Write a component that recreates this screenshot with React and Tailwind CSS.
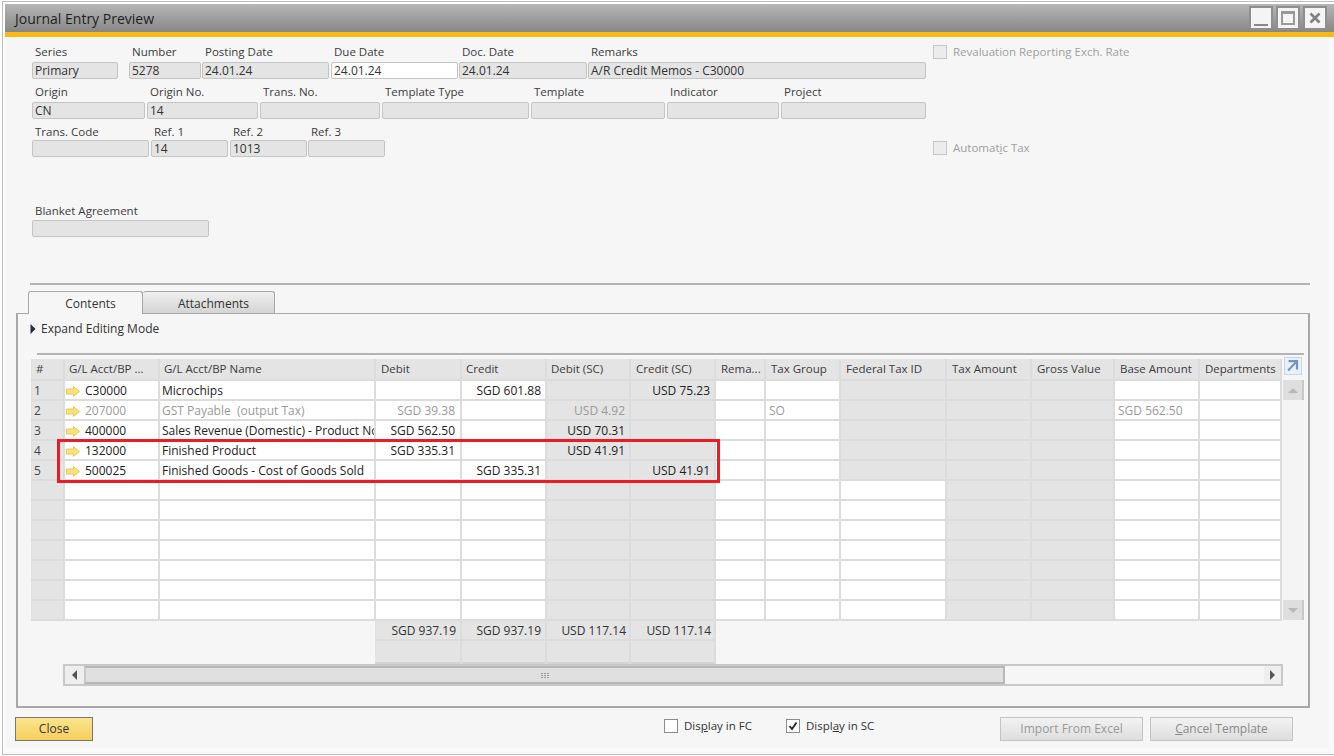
const G = "bg-[#e4e4e4]"

const columns = [
  { label: "#", w: "w-[34px]", pl: "pl-[5px]" },
  { label: "G/L Acct/BP ...", w: "w-[95px]", pl: "pl-[4px]" },
  { label: "G/L Acct/BP Name", w: "w-[216px]", pl: "pl-[4px]" },
  { label: "Debit", w: "w-[86px]" },
  { label: "Credit", w: "w-[85px]", pl: "pl-[4px]" },
  { label: "Debit (SC)", w: "w-[84px]", pl: "pl-[4px]" },
  { label: "Credit (SC)", w: "w-[85px]" },
  { label: "Rema...", w: "w-[50px]" },
  { label: "Tax Group", w: "w-[75px]" },
  { label: "Federal Tax ID", w: "w-[106px]" },
  { label: "Tax Amount", w: "w-[85px]" },
  { label: "Gross Value", w: "w-[83px]" },
  { label: "Base Amount", w: "w-[85px]" },
  { label: "Departments", w: "w-[82px]" },
]

const rows = [
  { acct: "C30000", name: "Microchips", credit: "SGD 601.88", creditSc: "USD 75.23" },
  { acct: "207000", name: "GST Payable  (output Tax)", debit: "SGD 39.38", debitSc: "USD 4.92", group: "SO", base: "SGD 562.50", dim: true },
  { acct: "400000", name: "Sales Revenue (Domestic) - Product No", debit: "SGD 562.50", debitSc: "USD 70.31" },
  { acct: "132000", name: "Finished Product", debit: "SGD 335.31", debitSc: "USD 41.91" },
  { acct: "500025", name: "Finished Goods - Cost of Goods Sold", credit: "SGD 335.31", creditSc: "USD 41.91" },
]

const totals = [
  { text: "SGD 937.19", w: "w-[87px]", pr: "pr-[4px]" },
  { text: "SGD 937.19", w: "w-[85px]", pr: "pr-[4px]" },
  { text: "USD 117.14", w: "w-[84px]", pr: "pr-[3px]" },
  { text: "USD 117.14", w: "w-[85px]", pr: "pr-[3px]" },
]

function Field({ label, value, w, ml = "", white, gap = "mb-[2px]" }) {
  return (
    <div className={`flex flex-col ${w} ${ml}`}>
      <div className={`h-[17px] ${gap} pl-[3px] text-[11.5px] leading-[17px] text-[#3c3c3c] whitespace-nowrap`}>{label}</div>
      <div className={`h-[17px] rounded-[2px] border border-[#c4c4c4] pl-[2px] leading-[16px] text-[#333] ${white ? "bg-white" : G}`}>
        {value}
      </div>
    </div>
  )
}

function Check({ checked, dim, children, className = "" }) {
  return (
    <div className={`flex items-center gap-[6px] h-[14px] text-[11.5px] ${className}`}>
      <div className={`w-[14px] h-[14px] border flex items-center justify-center ${dim ? "border-[#c8c8c8] bg-[#ececec]" : "border-[#8c8c8c] bg-white"}`}>
        {checked && (
          <svg width="10" height="10" viewBox="0 0 10 10">
            <path d="M1.5 5 L4 8 L8.5 1.5" fill="none" stroke="#222" strokeWidth="1.8" />
          </svg>
        )}
      </div>
      <span className={dim ? "text-[#a0a0a0]" : "text-[#333]"}>{children}</span>
    </div>
  )
}

function Arrow() {
  return (
    <svg width="14" height="11" viewBox="0 0 14 11" className="shrink-0">
      <path d="M0.5 3 H7.5 V0.6 L13.4 5.5 L7.5 10.4 V8 H0.5 Z" fill="#f8e27a" stroke="#e8c655" strokeWidth="1" />
    </svg>
  )
}

function WinButton({ children }) {
  return (
    <div className="w-[24px] h-[24px] border-2 border-[#8f8f8f] bg-[#f4f4f4] flex items-center justify-center">
      {children}
    </div>
  )
}

function Grid() {
  const base = "border-r-2 border-b-2 border-[#dcdcdc] p-0 whitespace-pre overflow-hidden"
  const cell = `${base} h-[20px] pt-[2px] leading-[16px]`
  return (
    <table className="table-fixed border-separate border-spacing-0 w-[1251px]">
      <colgroup>
        {columns.map((c) => <col key={c.label} className={c.w} />)}
      </colgroup>
      <thead>
        <tr>
          {columns.map((c) => (
            <th key={c.label} className={`${base} h-[22px] leading-[18px] ${G} font-normal text-left text-[11.5px] ${c.pl || "pl-[5px]"} text-[#3c3c3c]`}>{c.label}</th>
          ))}
        </tr>
      </thead>
      <tbody>
        {Array.from({ length: 12 }).map((_, i) => {
          const r = rows[i]
          const text = r && r.dim ? "text-[#9a9a9a]" : "text-[#222]"
          const amt = `${cell} text-right pr-[4px]`
          return (
            <tr key={i} className={`${text} bg-white`}>
              <td className={`${cell} ${G} pl-[3px] text-[#444]`}>{r ? i + 1 : ""}</td>
              <td className={`${cell} pl-[1px]`}>
                {r && <div className="flex items-center gap-[5px]"><Arrow />{r.acct}</div>}
              </td>
              <td className={`${cell} pl-[2px]`}>{r && r.name}</td>
              <td className={`${cell} text-right pr-[5px]`}>{r && r.debit}</td>
              <td className={amt}>{r && r.credit}</td>
              <td className={`${amt} ${G}`}>{r && r.debitSc}</td>
              <td className={`${amt} ${G}`}>{r && r.creditSc}</td>
              <td className={cell}></td>
              <td className={`${cell} pl-[3px]`}>{r && r.group}</td>
              <td className={`${cell} ${r ? G : ""}`}></td>
              <td className={`${cell} ${G}`}></td>
              <td className={`${cell} ${G}`}></td>
              <td className={`${cell} pl-[3px]`}>{r && r.base}</td>
              <td className={cell}></td>
            </tr>
          )
        })}
      </tbody>
    </table>
  )
}

export default function App() {
  return (
    <div className="w-[1334px] h-[756px] bg-white pt-[1px] pl-[2px] overflow-hidden text-[12px] font-['Open_Sans',sans-serif]">
      <div className="h-[754px] border-l border-t border-b border-[#bdbdbd] bg-[#f6f6f6] flex flex-col">
        <div className="shrink-0 bg-white pt-[2px] pl-[2px]">
          <div className="h-[28px] bg-gradient-to-b from-[#b6b6b6] to-[#878787] flex items-center justify-between pl-[10px] pr-[7px]">
            <span className="text-[14px] pt-[1px] text-[#1f1f1f]">Journal Entry Preview</span>
            <div className="flex gap-[3px]">
              <WinButton><div className="w-[14px] h-[2px] bg-[#888] mt-[14px]" /></WinButton>
              <WinButton><div className="w-[14px] h-[14px] border-2 border-[#999] border-t-[3px]" /></WinButton>
              <WinButton>
                <svg width="12" height="12" viewBox="0 0 12 12">
                  <path d="M1.5 1.5 L10.5 10.5 M10.5 1.5 L1.5 10.5" stroke="#808080" strokeWidth="2.6" />
                </svg>
              </WinButton>
            </div>
          </div>
          <div className="h-[5px] bg-[#fdb913]" />
        </div>

        <div className="flex-1 border-l-[3px] border-r-[5px] border-b-[6px] border-[#fafafa] pl-[10px]">
          <div className="ml-[16px] pt-[6px]">
            <div className="flex items-start">
              <div className="w-[894px]">
                <div className="flex">
                  <Field label="Series" value="Primary" w="w-[86px]" />
                  <Field label="Number" value="5278" w="w-[72px]" ml="ml-[11px]" />
                  <Field label="Posting Date" value="24.01.24" w="w-[127px]" ml="ml-[1px]" />
                  <Field label="Due Date" value="24.01.24" w="w-[127px]" ml="ml-[2px]" white />
                  <Field label="Doc. Date" value="24.01.24" w="w-[128px]" ml="ml-[1px]" />
                  <Field label="Remarks" value="A/R Credit Memos - C30000" w="w-[338px]" ml="ml-[1px]" />
                </div>
                <div className="flex mt-[4px]">
                  <Field label="Origin" value="CN" w="w-[113px]" />
                  <Field label="Origin No." value="14" w="w-[111px]" ml="ml-[2px]" />
                  <Field label="Trans. No." w="w-[120px]" ml="ml-[2px]" />
                  <Field label="Template Type" w="w-[147px]" ml="ml-[2px]" />
                  <Field label="Template" w="w-[134px]" ml="ml-[2px]" />
                  <Field label="Indicator" w="w-[112px]" ml="ml-[2px]" />
                  <Field label="Project" w="w-[145px]" ml="ml-[2px]" />
                </div>
                <div className="flex mt-[4px]">
                  <Field label="Trans. Code" w="w-[117px]" gap="mb-0" />
                  <Field label="Ref. 1" value="14" w="w-[77px]" ml="ml-[2px]" gap="mb-0" />
                  <Field label="Ref. 2" value="1013" w="w-[77px]" ml="ml-[2px]" gap="mb-0" />
                  <Field label="Ref. 3" w="w-[77px]" ml="ml-[1px]" gap="mb-0" />
                </div>
              </div>
              <div className="ml-[7px] mt-[2px]">
                <Check dim>Revaluation Reporting Exch. Rate</Check>
                <Check dim className="mt-[82px]">Automat<span className="underline">i</span>c Tax</Check>
              </div>
            </div>
            <div className="mt-[45px] w-[177px]">
              <Field label="Blanket Agreement" w="w-[177px]" gap="mb-[1px]" />
            </div>
          </div>

          <div className="mt-[46px] ml-[14px] w-[1280px] h-[2px] bg-[#b4b4b4]" />

          <div className="flex mt-[6px] ml-[12px] relative z-10 h-[22px]">
            <div className="w-[115px] h-[23px] pl-[10px] rounded-t-[3px] border border-b-0 border-[#a8a8a8] bg-[#f6f6f6] text-center leading-[24px] text-[#333]">Contents</div>
            <div className="w-[132px] pl-[10px] rounded-t-[3px] border border-b-0 border-l-0 border-[#a8a8a8] bg-gradient-to-b from-[#efefef] to-[#d4d4d4] text-center leading-[24px] text-[#333]">Attachments</div>
          </div>

          <div className="w-[1294px] h-[395px] border-2 border-[#a8a8a8] border-t-[1px] pt-[8px]">
            <div className="flex items-center pl-[12px] h-[14px] text-[#333]">
              <svg width="6" height="10" viewBox="0 0 6 10" className="mr-[5px]"><path d="M0.5 0 L5.5 5 L0.5 10 Z" fill="#2a2a40" /></svg>
              Expand Editing Mode
            </div>

            <div className="relative mt-[17px] ml-[13px]">
              <div className="ml-[6px] w-[1267px] h-[2px] bg-[#b4b4b4]" />
              <div className="flex mt-[4px]">
                <Grid />
                <div className="flex flex-col ml-[1px] w-[21px] -mt-[2px] mb-[1px]">
                  <svg width="18" height="18" viewBox="0 0 18 18" className="ml-[1px] bg-[#eaf0f8] border border-[#c8d6ea]">
                    <path d="M4 3.5 H13.5 V13 M13.5 3.5 L3.5 14" fill="none" stroke="#6f93c9" strokeWidth="2.4" />
                  </svg>
                  <div className="mt-[5px] h-[20px] bg-[#dedede] flex items-center justify-center border-r-2 border-[#c8c8c8]">
                    <div className="w-0 h-0 border-x-[5px] border-x-transparent border-b-[5px] border-b-[#b8b8b8]" />
                  </div>
                  <div className="flex-1 bg-[#f4f4f4]" />
                  <div className="h-[20px] bg-[#dedede] flex items-center justify-center border-r-2 border-[#c8c8c8]">
                    <div className="w-0 h-0 border-x-[5px] border-x-transparent border-t-[5px] border-t-[#b8b8b8]" />
                  </div>
                </div>
              </div>

              <div className="flex ml-[344px]">
                {totals.map((t, i) => (
                  <div key={i} className={`${t.w} border-r-2 border-[#dcdcdc]`}>
                    <div className={`h-[20px] ${G} border-b-2 border-[#dcdcdc] text-right ${t.pr} pt-[2px] leading-[16px] text-[#333]`}>{t.text}</div>
                    <div className={`h-[23px] ${G} border-b-2 border-[#d4d4d4]`} />
                  </div>
                ))}
              </div>

              <div className="ml-[32px] w-[1220px] h-[22px] border-2 border-[#c8c8c8] flex items-stretch">
                <div className="w-[19px] bg-[#eeeeee] flex items-center justify-center">
                  <div className="w-0 h-0 border-y-[5px] border-y-transparent border-r-[5px] border-r-[#555]" />
                </div>
                <div className="w-[921px] bg-[#e0e0e0] border-2 border-[#b8b8b8] border-l-[#c8c8c8] flex items-center justify-center">
                  <div className="grid grid-cols-3 gap-[1px]">
                    {Array.from({ length: 9 }).map((_, i) => <div key={i} className="w-[2px] h-[1px] bg-[#9a9a9a]" />)}
                  </div>
                </div>
                <div className="flex-1" />
                <div className="w-[17px] bg-[#eeeeee] flex items-center justify-center">
                  <div className="w-0 h-0 border-y-[5px] border-y-transparent border-l-[5px] border-l-[#555]" />
                </div>
              </div>

              {/* red highlight over rows 4 and 5 */}
              <div className="absolute left-[26px] top-[86px] w-[663px] h-[44px] border-[3px] border-[#ed1c24]" />
            </div>
          </div>

          <div className="flex items-start mt-[9px] -ml-[1px]">
            <div className="w-[78px] h-[24px] border border-[#777] bg-gradient-to-b from-[#fbe58c] to-[#f5cf5c] text-center leading-[22px] text-[#333]">Close</div>
            <Check className="ml-[571px] w-[122px] mt-[2px]">Dis<span className="underline">p</span>lay in FC</Check>
            <Check checked className="w-[214px] mt-[2px]">Displ<span className="underline">a</span>y in SC</Check>
            <div className="w-[143px] h-[24px] border border-[#c4c4c4] bg-gradient-to-b from-[#f2f2f2] to-[#dedede] text-center leading-[22px] text-[#9a9a9a]">Import From Excel</div>
            <div className="ml-[7px] w-[143px] h-[24px] border border-[#c4c4c4] bg-gradient-to-b from-[#f2f2f2] to-[#dedede] text-center leading-[22px] text-[#8a8a8a]"><span className="underline">C</span>ancel Template</div>
          </div>
        </div>
      </div>
    </div>
  )
}
